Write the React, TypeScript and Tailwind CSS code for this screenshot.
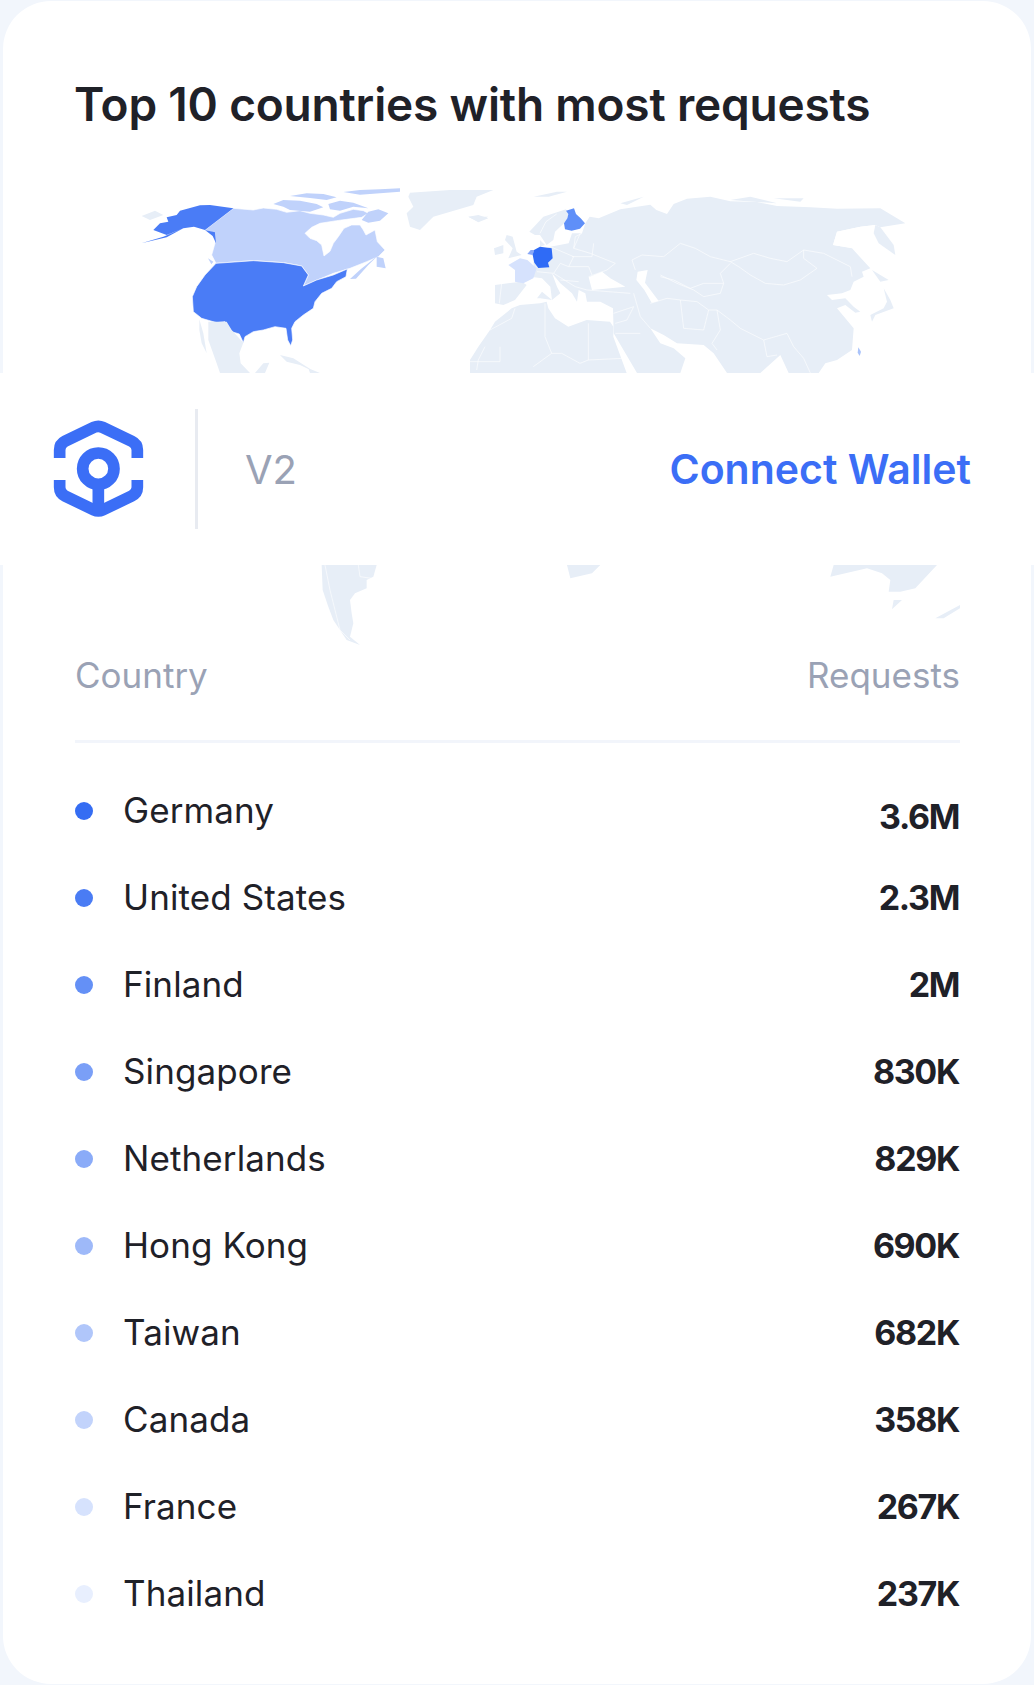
const rows = [
  { name: 'Germany', value: '3.6M', dot: 'bg-[#356df3]' },
  { name: 'United States', value: '2.3M', dot: 'bg-[#4a7cf4]' },
  { name: 'Finland', value: '2M', dot: 'bg-[#6490f6]' },
  { name: 'Singapore', value: '830K', dot: 'bg-[#7a9ff7]' },
  { name: 'Netherlands', value: '829K', dot: 'bg-[#8aabf8]' },
  { name: 'Hong Kong', value: '690K', dot: 'bg-[#9eb9f9]' },
  { name: 'Taiwan', value: '682K', dot: 'bg-[#b0c6fa]' },
  { name: 'Canada', value: '358K', dot: 'bg-[#c2d3fb]' },
  { name: 'France', value: '267K', dot: 'bg-[#d6e2fd]' },
  { name: 'Thailand', value: '237K', dot: 'bg-[#e8effe]' },
]

const LAND = '#e7eef7'
const third = 'scale(0.33333)'

function WorldMap() {
  return (
    <svg viewBox="75 180 885 470" className="block h-[470px] w-[885px]" aria-hidden>
      {/* North America */}
      <g transform={`translate(120,180) ${third}`} stroke="#fff" strokeWidth="2" strokeLinejoin="round">
        <path fill="#c0d2fb" d="M340 85L400 90 430 84 470 88 500 97 540 92 570 100 610 105 640 112 660 100 700 88 730 92 745 100 725 112 680 118 650 122 600 130 575 142 555 160 570 175 590 182 605 195 612 228 630 214 640 190 655 170 672 145 695 135 720 135 730 150 738 165 765 150 772 185 795 210 775 230 740 245 690 265 640 280 580 305 550 318 565 285 545 258 490 248 400 242 288 250 275 225 285 190 285 160 255 150Z" />
        <path fill="#c0d2fb" stroke="none" d="M460 72L490 60 540 62 590 72 610 82 570 95 510 90 490 80ZM510 48L560 40 610 42 650 52 620 60 570 54ZM625 72L660 62 700 68 745 85 700 80 660 92 630 88ZM670 36L720 30 780 28 840 25 840 35 780 40 720 44ZM745 95L775 88 805 100 780 122 745 128 725 120ZM770 230L790 235 797 265 770 260ZM690 297L722 268 775 226 745 255 708 296ZM264 235L280 245 274 253Z" />
        <path fill="#4a7cf6" d="M288 250L400 242 490 248 545 258 565 285 550 318 590 300 640 285 682 267 678 290 650 305 635 325 605 340 585 365 580 385 550 405 525 425 515 445 518 480 512 497 503 480 498 445 465 440 430 450 400 455 375 470 370 488 358 462 335 455 315 425 290 428 245 415 220 395 217 350 230 320 255 285Z" />
        <path fill="#4a7cf6" stroke="none" d="M340 85L255 150 222 140 190 145 140 165 100 150 120 130 145 125 140 112 170 105 180 92 240 76 270 75ZM64 190L130 170 190 145 140 172ZM255 150L285 157 288 190 278 168Z" />
        <path fill={LAND} stroke="none" d="M65 108L105 92 130 105 90 120Z" />
      </g>
      <g transform={`translate(0,0) ${third}`} fill={LAND}>
        <path d="M598 958L610 1000 620 1060 605 1030 598 990ZM625 965L680 965 695 990 730 1028 718 1060 722 1090 750 1119 660 1119 650 1090 625 1020ZM790 1090L808 1088 795 1119 765 1119ZM840 1065L880 1075 920 1100 950 1119 900 1095 860 1085ZM925 1105L960 1119 930 1119Z" />
        <path d="M1230 578L1350 570 1480 570 1430 590 1420 615 1300 650 1260 690 1230 680 1220 640 1240 620 1225 590ZM1405 650L1465 650 1435 665Z" />
      </g>

      {/* Eurasia */}
      <g transform={`translate(517,0) ${third}`}>
        <path fill={LAND} d="M205 670L218 650 245 655 310 628 400 614 418 630 450 642 470 612 510 596 580 590 640 604 720 606 780 618 880 622 960 626 1090 625 1165 670 1090 682 1075 675 1030 680 960 695 948 735 1005 745 1060 805 1035 815 1040 830 1010 845 1000 870 975 880 930 885 945 900 985 895 1010 920 1030 935 1015 938 985 915 960 925 1010 985 1005 1050 960 1080 925 1090 905 1119 815 1119 790 1065 730 1119 630 1119 590 1060 560 1035 480 1030 440 1005 400 985 430 1030 470 1045 505 1075 490 1119 360 1119 290 1000 288 925 250 905 210 905 205 880 185 870 180 905 165 880 130 850 105 820 120 860 130 880 105 900 100 860 75 835 40 830 50 800 48 760 100 740 155 730 165 700 195 700Z" />
        <path fill="#fff" d="M215 832L255 815 280 835 325 860 280 865 225 870ZM362 815L392 810 384 848 425 903 404 908 382 870 358 840ZM960 695L1030 680 1075 675 1075 710 1135 765 1090 735 1010 745 948 735Z" />
        <path fill={LAND} d="M1075 675L1090 682 1130 735 1135 765 1085 730 1070 700ZM1100 865L1120 900 1130 925 1075 945 1065 965 1060 945 1100 925 1110 905ZM1065 810L1115 840 1090 845Z" />
        <path fill="#aac3fa" d="M1024 1042L1032 1055 1028 1068 1022 1058Z" />
        <path fill={LAND} d="M60 895L75 875 105 900 70 895ZM50 590L120 575 150 575 95 590ZM310 610L380 590 330 615ZM640 600L700 590 780 610ZM770 595L860 595 850 605Z" />
        <g fill="none" stroke="#fff" strokeWidth="1.8" strokeLinejoin="round">
          <path d="M345 780L375 765 440 770 490 730 535 745 580 770 640 785 710 760 760 775 810 785 860 750 920 760 1000 800 1005 830" />
          <path d="M640 785L665 800 700 825 745 850 800 855 850 840 900 805 860 775 860 750M620 850L610 820 640 790" />
          <path d="M345 780L355 810M430 830L470 840 520 865 560 850 620 850 610 880 560 890 530 870 480 850 430 825" />
          <path d="M400 910L450 895 490 900 500 985 560 990 575 930 600 930 640 960 670 985 740 1020 810 1000 830 1040 860 1075 880 1119" />
          <path d="M600 930L610 990 585 1030 600 1050M490 900L540 905 575 930M740 1020L750 1070 780 1065" />
          <path d="M350 880L370 950 400 985M290 940L350 920 330 960 295 970M295 1000L370 1000M210 870L340 880" />
          <path d="M190 700L170 745 220 760 295 790 270 810 215 830M100 740L170 770 155 800 215 800 225 825M60 815L110 820 150 845 175 860M155 800L130 790 110 820M175 860L210 870M130 840L185 845" />
          <path d="M170 745L175 710 195 700M165 770L225 770 230 730" />
        </g>
      </g>

      {/* Western Europe and Africa */}
      <g transform={`translate(440,190) ${third}`}>
        <path fill={LAND} d="M85 80L115 75 145 85 115 97ZM200 135L218 140 230 185 245 195 205 205 218 175 195 150ZM162 175L190 165 190 190 165 195ZM165 285L245 275 260 285 225 330 190 345 165 340ZM268 125L310 80 378 58 385 72 382 85 372 100 345 125 340 150 320 165 300 135 285 135ZM300 150L315 165 300 170Z" />
        <path fill="none" stroke="#fff" strokeWidth="1.8" d="M300 130L318 95 350 72M185 280L178 340" />
        <path fill="#5f8ff8" d="M378 62L402 55 408 72 422 85 435 100 420 116 395 122 375 118 372 100 382 85 385 72Z" />
        <path fill="#d6e2fd" d="M205 225L240 205 262 210 290 235 280 265 250 280 225 275 225 240Z" />
        <path fill="#88a8f8" d="M262 192L272 180 282 180 278 195Z" />
        <path fill="#2f6bf6" d="M282 180L300 170 335 175 338 205 324 218 328 232 295 234 283 218 278 195Z" />
        <path fill={LAND} d="M90 549L90 510 115 470 150 420 165 395 215 355 240 345 300 340 320 335 325 355 345 385 385 410 440 390 510 395 520 410 520 440 560 549Z" />
        <path fill="none" stroke="#fff" strokeWidth="1.8" d="M180 470L180 515 90 515M150 420L215 385 225 355M315 340L315 440 335 490 365 490 420 520 445 510 445 400M445 510L550 505M335 490L280 530M135 470L115 510 110 540" />
      </g>

      {/* Southern edge */}
      <g transform={`translate(0,360) ${third}`} fill={LAND}>
        <path d="M965 615L1130 615 1120 650 1100 660 1100 685 1065 700 1050 720 1055 760 1060 790 1050 830 1080 855 1040 840 1000 780 985 740 968 690Z" />
        <path fill="none" stroke="#fff" strokeWidth="1.8" d="M975 615L990 690 1010 770 1020 810 1050 840M1075 615L1080 650 1115 655" />
      </g>
      <g transform={`translate(517,360) ${third}`} fill={LAND}>
        <path d="M150 615L250 615 225 640 160 655ZM950 615L1260 615 1195 685 1150 695 1115 695 1120 660 1095 640 1050 625 940 650ZM1130 720L1155 720 1125 748ZM1255 775L1329 735 1329 745 1280 775Z" />
      </g>
    </svg>
  )
}

function Logo() {
  return (
    <svg viewBox="0 0 130 130" className="-mt-[8px] h-[130px] w-[130px] shrink-0" aria-hidden>
      <g transform="scale(0.33333)" fill="none" stroke="#3b6ef6" strokeWidth="35" strokeLinejoin="round">
        <path d="M59 174V150Q59 132 75 124L162 82Q175 76 188 82L275 124Q292 132 292 150V174" />
        <path d="M59 240V262Q59 280 75 288L162 330Q175 336 188 330L275 288Q292 280 292 262V240" />
        <circle cx="175" cy="206" r="47" />
        <path d="M175 255V335" />
      </g>
    </svg>
  )
}

export default function App() {
  return (
    <div className="relative h-[1685px] w-[1034px] overflow-hidden bg-[#f2f6fc] pt-px font-['Inter',sans-serif]">
      <div className="mx-[3px] h-[1683px] rounded-[48px] bg-white pl-[72px] pr-[71px]">
        <h1 className="-ml-px h-[179px] pt-[73px] text-[46px] font-semibold leading-[60px] tracking-[-0.004em] text-[#1f2128]">
          Top 10 countries with most requests
        </h1>
        <WorldMap />
        <div className="flex h-[90px] items-center justify-between pb-[42px] pt-[2px] text-[35px] text-[#9aa2b5]">
          <span>Country</span>
          <span>Requests</span>
        </div>
        <div className="h-[3px] bg-[#f2f5fb]" />
        <ul className="pt-[24px]">
          {rows.map((row, i) => (
            <li key={row.name} className="flex h-[87px] items-center text-[35px] tracking-[0.003em] text-[#1f2128]">
              <span className={`mr-[30px] h-[18px] w-[18px] rounded-full ${row.dot}`} />
              <span>{row.name}</span>
              {/* first value sits a little lower in the source */}
              <span className={i === 0 ? 'ml-auto mr-px pt-[12px] text-[34px] font-bold tracking-[-0.04em]' : 'ml-auto mr-px text-[34px] font-bold tracking-[-0.04em]'}>
                {row.value}
              </span>
            </li>
          ))}
        </ul>
      </div>

      {/* Sticky nav overlapping the map */}
      <header className="absolute inset-x-0 top-[373px] flex h-[192px] items-center bg-white pl-[40px] pr-[63px]">
        <Logo />
        <div className="ml-[25px] h-[120px] w-[3px] bg-[#e8ebf1]" />
        <span className="ml-[47px] pt-[2px] text-[40px] text-[#9aa2b5]">V2</span>
        <a className="ml-auto pt-[2px] text-[41px] font-semibold text-[#3b6ef6]">Connect Wallet</a>
      </header>
    </div>
  )
}
